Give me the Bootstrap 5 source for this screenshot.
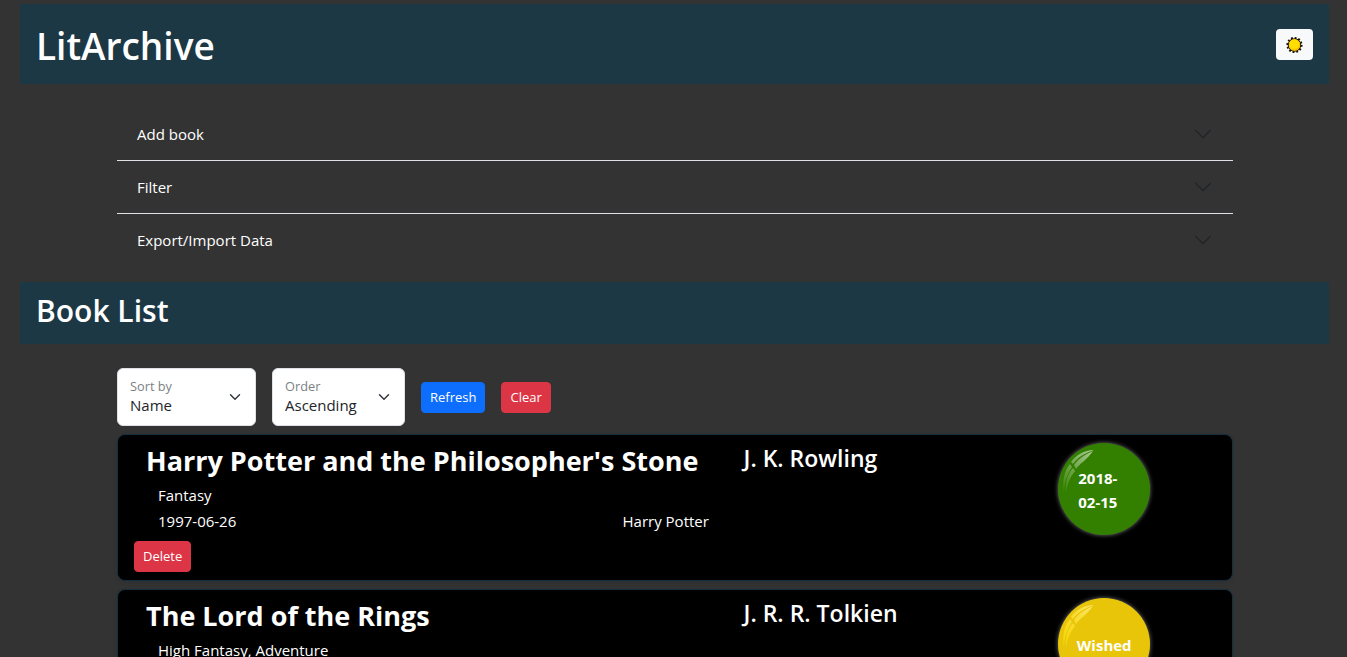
<!DOCTYPE html>
<html lang="en">
<head>
<meta charset="utf-8">
<meta name="viewport" content="width=device-width, initial-scale=1">
<title>LitArchive</title>
<link href="https://cdn.jsdelivr.net/npm/bootstrap@5.3.0/dist/css/bootstrap.min.css" rel="stylesheet">
<style>
  body { background: #333; color: #fff; font-family: "Open Sans", "Noto Sans", sans-serif; font-size: 15px; line-height: 24px; padding: 4px 18px 16px 20px; }
  h1, h2, h3, h4 { margin: 0; }
  .banner { background: #1c3845; }
  .banner h1 { font-size: 37px; line-height: 44px; padding-top: 4px; font-weight: 600; }
  .banner h2 { font-size: 30px; line-height: 38px; padding: 2px 0 6px; font-weight: 600; }
  .theme-btn { background: #f8f9fa; width: 37px; height: 31px; }
  .theme-btn:hover { background: #fff; }
  .content { margin: 0 96px 0 97px; }
  .accordion { --bs-accordion-bg: transparent; --bs-accordion-color: #fff; --bs-accordion-btn-color: #fff; --bs-accordion-btn-bg: transparent; --bs-accordion-border-color: #dee2e6; }
  .accordion-button { font-size: 15px; line-height: 20px; }
  .accordion-header { line-height: 20px; }
  .btn-sm { font-size: 13px; line-height: 21px; }
  .form-floating > .form-select { font-size: 15px; line-height: 20px; border-color: #dee2e6; }
  .form-floating > label { font-size: 15px; }
  .form-floating > .form-select ~ label { color: #7b7f83; opacity: 1; }
  .sort-box { width: 139px; }
  .order-box { width: 133px; }
  .book { background: #000; border: 1px solid #143040; border-radius: 8px; padding: 8px 16px; box-shadow: 0 2px 4px rgba(0, 0, 0, .08); }
  .book-top { display: grid; grid-template-columns: 84% 16%; margin: 0 -16px 6px 12px; }
  .book-head { display: grid; grid-template-columns: 65.5% 34.5%; margin-bottom: 4px; }
  .book-head h3 { font-size: 27px; line-height: 36px; font-weight: 700; }
  .book-head h4 { font-size: 23px; line-height: 31px; font-weight: 600; }
  .book-meta { display: grid; grid-template-columns: 51.6% 48.4%; row-gap: 2px; padding-left: 12px; }
  .genre { grid-column: 1 / -1; }
  .medal { width: 92px; height: 92px; padding: 2px 20px 0; border-radius: 50%; font-weight: 700; box-shadow: 0 0 4px #777; }
  .medal svg { top: 0; left: 0; }
  .medal-read { background: #338000; }
  .medal-wish { background: #e8c508; }
</style>
</head>
<body>
<header class="banner d-flex justify-content-between align-items-center p-3">
  <h1>LitArchive</h1>
  <button class="theme-btn btn btn-sm p-0 d-flex align-items-center justify-content-center" type="button" aria-label="Switch theme">
    <svg width="17" height="17" viewBox="0 0 17 17" aria-hidden="true">
      <circle cx="8.500" cy="9" r="7" fill="none" stroke="#1a1400" stroke-width="2.200" stroke-dasharray="1.830 1.830"/>
      <circle cx="8.500" cy="9" r="6.300" fill="#ffde00" stroke="#1a1400" stroke-width="1"/>
      <circle cx="8.500" cy="9" r="5.500" fill="#ffb300"/>
      <circle cx="8.200" cy="8.500" r="5" fill="#ffde00"/>
    </svg>
  </button>
</header>

<main>
  <div class="content pt-4 pb-3">
    <div class="accordion accordion-flush" id="tools">
      <div class="accordion-item">
        <div class="accordion-header"><button class="accordion-button collapsed" type="button" data-bs-toggle="collapse" data-bs-target="#add" aria-controls="add" aria-expanded="false">Add book</button></div>
        <div id="add" class="accordion-collapse collapse" data-bs-parent="#tools"></div>
      </div>
      <div class="accordion-item">
        <div class="accordion-header"><button class="accordion-button collapsed" type="button" data-bs-toggle="collapse" data-bs-target="#filter" aria-controls="filter" aria-expanded="false">Filter</button></div>
        <div id="filter" class="accordion-collapse collapse" data-bs-parent="#tools"></div>
      </div>
      <div class="accordion-item">
        <div class="accordion-header"><button class="accordion-button collapsed" type="button" data-bs-toggle="collapse" data-bs-target="#data" aria-controls="data" aria-expanded="false">Export/Import Data</button></div>
        <div id="data" class="accordion-collapse collapse" data-bs-parent="#tools"></div>
      </div>
    </div>
  </div>

  <div class="banner px-3 py-2"><h2>Book List</h2></div>

  <div class="content pt-4">
    <div class="d-flex flex-wrap align-items-center gap-3 mb-2">
      <div class="form-floating sort-box">
        <select class="form-select" id="sort"><option>Name</option><option>Author</option></select>
        <label for="sort">Sort by</label>
      </div>
      <div class="form-floating order-box">
        <select class="form-select" id="order"><option>Ascending</option><option>Descending</option></select>
        <label for="order">Order</label>
      </div>
      <button class="btn btn-primary btn-sm" type="button">Refresh</button>
      <button class="btn btn-danger btn-sm" type="button">Clear</button>
    </div>

    <article class="book mb-2">
      <div class="book-top">
        <div>
          <div class="book-head"><h3>Harry Potter and the Philosopher's Stone</h3><h4>J. K. Rowling</h4></div>
          <div class="book-meta"><div class="genre">Fantasy</div><div>1997-06-26</div><div>Harry Potter</div></div>
        </div>
        <div class="medal medal-read position-relative d-flex align-items-center justify-content-center">
          <svg class="position-absolute" width="92" height="92" viewBox="0 0 92 92" aria-hidden="true">
            <defs><linearGradient id="shineRead" x1="1" y1="0" x2="0" y2="1"><stop offset="0" stop-color="#fff" stop-opacity=".6"/><stop offset="1" stop-color="#fff" stop-opacity=".05"/></linearGradient></defs>
            <path d="M36 7C26 7 18 12 13 19l2 2C20 14 27 10 36 7zM35 8C28 11 21 15 16 22l2 4C22 20 29 17 35 8zM12 21C6 28 4 38 6 50 6 40 9 31 14 24zM15 25C9 31 7 41 8 49 9 41 12 34 17 28z" fill="url(#shineRead)"/>
          </svg>
          <span>2018-02-15</span>
        </div>
      </div>
      <button class="btn btn-danger btn-sm" type="button">Delete</button>
    </article>

    <article class="book mb-2">
      <div class="book-top">
        <div>
          <div class="book-head"><h3>The Lord of the Rings</h3><h4>J. R. R. Tolkien</h4></div>
          <div class="book-meta"><div class="genre">High Fantasy, Adventure</div></div>
        </div>
        <div class="medal medal-wish position-relative d-flex align-items-center justify-content-center">
          <svg class="position-absolute" width="92" height="92" viewBox="0 0 92 92" aria-hidden="true">
            <defs><linearGradient id="shineWish" x1="1" y1="0" x2="0" y2="1"><stop offset="0" stop-color="#ffec80" stop-opacity=".8"/><stop offset="1" stop-color="#ffe000" stop-opacity=".6"/></linearGradient></defs>
            <path d="M36 7C26 7 18 12 13 19l2 2C20 14 27 10 36 7zM35 8C28 11 21 15 16 22l2 4C22 20 29 17 35 8zM12 21C6 28 4 38 6 50 6 40 9 31 14 24zM15 25C9 31 7 41 8 49 9 41 12 34 17 28z" fill="url(#shineWish)"/>
          </svg>
          <span>Wished</span>
        </div>
      </div>
      <button class="btn btn-danger btn-sm" type="button">Delete</button>
    </article>
  </div>
</main>
<script src="https://cdn.jsdelivr.net/npm/bootstrap@5.3.0/dist/js/bootstrap.bundle.min.js"></script>
</body>
</html>
